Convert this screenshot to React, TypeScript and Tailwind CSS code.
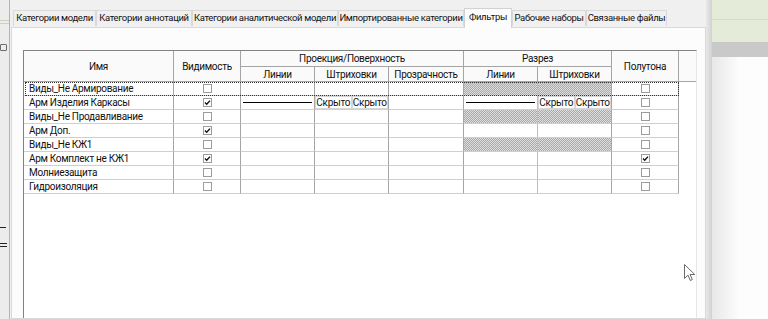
import React from "react";

type Row = {
  name: string;
  visible: boolean;
  halftone?: boolean;
  hatched?: boolean;
  overrides?: boolean;
  focus?: boolean;
};

const rows: Row[] = [
  { name: "Виды_Не Армирование", visible: false, hatched: true, focus: true },
  { name: "Арм Изделия Каркасы", visible: true, overrides: true },
  { name: "Виды_Не Продавливание", visible: false, hatched: true },
  { name: "Арм Доп.", visible: true },
  { name: "Виды_Не КЖ1", visible: false, hatched: true },
  { name: "Арм Комплект не КЖ1", visible: true, halftone: true },
  { name: "Молниезащита", visible: false },
  { name: "Гидроизоляция", visible: false },
];

const tabs = [
  { label: "Категории модели", w: "w-[83px]" },
  { label: "Категории аннотаций", w: "w-[96px]" },
  { label: "Категории аналитической модели", w: "w-[146px]" },
  { label: "Импортированные категории", w: "w-[126px]" },
  { label: "Фильтры", w: "w-[48px]", active: true },
  { label: "Рабочие наборы", w: "w-[74px]" },
  { label: "Связанные файлы", w: "w-[81px]" },
];

const hatch =
  "bg-[image:repeating-conic-gradient(#a9a9a9_0%_25%,#dedede_0%_50%)] bg-[length:2px_2px]";

function CheckBox({ checked }: { checked: boolean }) {
  return (
    <span className="w-[9px] h-[9px] border border-[#9c9c9c] bg-white flex items-center justify-center">
      {checked && (
        <svg width="7" height="7" viewBox="0 0 7 7">
          <path d="M1 3.6 L2.7 5.3 L6 1.6" fill="none" stroke="#111" strokeWidth="1.4" />
        </svg>
      )}
    </span>
  );
}

function Hidden() {
  return (
    <div className="h-full flex">
      <span className="w-1/2 h-full border border-[#d6d6d6] bg-white flex items-center justify-center leading-none">
        Скрыто
      </span>
      <span className="w-1/2 h-full border border-[#d6d6d6] bg-white flex items-center justify-center leading-none">
        Скрыто
      </span>
    </div>
  );
}

function LineSample() {
  return (
    <div className="h-full flex items-center px-[2px]">
      <div className="h-px w-full bg-black" />
    </div>
  );
}

export default function App() {
  return (
    <div className="relative w-[768px] h-[319px] overflow-hidden flex bg-white font-['Roboto',sans-serif] text-[10px] tracking-[-0.3px] text-[#111]">
      {/* window behind, left edge */}
      <div className="w-[10px] h-full bg-[#ececec] border-r border-[#b4b4b4] flex flex-col">
        <div className="h-[20px]" />
        <div className="h-px bg-[#c7d3bb]" />
        <div className="h-[2px]" />
        <div className="h-px bg-[#c7d3bb]" />
        <div className="h-[20px]" />
        <div className="w-[7px] h-[7px] border border-[#6c6c6c] rounded-[1px]" />
        <div className="h-[176px]" />
        <div className="w-[6px] h-px bg-[#222]" />
        <div className="h-[15px]" />
        <div className="w-[7px] h-px bg-[#222]" />
        <div className="h-[2px]" />
        <div className="w-[7px] h-px bg-[#222]" />
      </div>

      {/* dialog */}
      <div className="w-[696px] h-full bg-[#f0f0f0] flex flex-col">
        <div className="h-[27px] flex items-end pl-[3px] text-[9.5px] tracking-[-0.35px]">
          {tabs.map((t) =>
            t.active ? (
              <div
                key={t.label}
                className={`${t.w} h-[20px] -mb-px relative z-10 bg-[#fcfcfc] border-t border-l border-r border-[#d2d2d2] flex items-center justify-center pb-[3px] whitespace-nowrap`}
              >
                {t.label}
              </div>
            ) : (
              <div
                key={t.label}
                className={`${t.w} h-[16px] mb-px bg-[#f0f0f0] border-t border-l border-r border-[#d9d9d9] flex items-center justify-center whitespace-nowrap`}
              >
                {t.label}
              </div>
            )
          )}
        </div>

        <div className="ml-px w-[695px] flex-1 bg-[#fcfcfc] border border-[#d9d9d9] pt-[22px] pl-[11px] flex flex-col">
          <div className="w-[674px] flex-1 bg-white border-l border-t border-[#828282] border-r-[#e6e6e6] border-r">
            {/* header */}
            <div className="grid grid-cols-[150px_67px_74px_74px_75px_74px_74px_67px_17px] grid-rows-[16px_15px] bg-[#fafafa]">
              <div className="row-span-2 border-r border-b border-[#a5a5a5] flex items-center justify-center">Имя</div>
              <div className="row-span-2 border-r border-b border-[#a5a5a5] flex items-center justify-center">Видимость</div>
              <div className="col-span-3 border-r border-b border-[#a5a5a5] flex items-center justify-center">Проекция/Поверхность</div>
              <div className="col-span-2 border-r border-b border-[#a5a5a5] flex items-center justify-center">Разрез</div>
              <div className="row-span-2 border-r border-b border-[#a5a5a5] flex items-center justify-center">Полутона</div>
              <div className="row-span-2 border-b border-[#a5a5a5]" />
              <div className="border-r border-b border-[#a5a5a5] flex items-center justify-center">Линии</div>
              <div className="border-r border-b border-[#a5a5a5] flex items-center justify-center">Штриховки</div>
              <div className="border-r border-b border-[#a5a5a5] flex items-center justify-center">Прозрачность</div>
              <div className="border-r border-b border-[#a5a5a5] flex items-center justify-center">Линии</div>
              <div className="border-r border-b border-[#a5a5a5] flex items-center justify-center">Штриховки</div>
            </div>

            {/* rows */}
            {rows.map((r) => (
              <div key={r.name} className="relative flex h-[14px]">
                <div className="w-[150px] border-r border-r-[#a5a5a5] border-b border-b-[#cfcfcf] flex items-center pl-[5px] whitespace-nowrap leading-none">
                  {r.name}
                </div>
                <div className="w-[67px] border-r border-r-[#a5a5a5] border-b border-b-[#cfcfcf] flex items-center justify-center">
                  <CheckBox checked={r.visible} />
                </div>
                <div className="w-[74px] border-r border-r-[#a5a5a5] border-b border-b-[#cfcfcf]">
                  {r.overrides && <LineSample />}
                </div>
                <div className="w-[74px] border-r border-r-[#a5a5a5] border-b border-b-[#cfcfcf]">
                  {r.overrides && <Hidden />}
                </div>
                <div className="w-[75px] border-r border-r-[#a5a5a5] border-b border-b-[#cfcfcf]" />
                <div className={`w-[74px] border-r border-r-[#bdbdbd] border-b border-b-[#cfcfcf] ${r.hatched ? hatch : ""}`}>
                  {r.overrides && <LineSample />}
                </div>
                <div className={`w-[74px] border-r border-r-[#a5a5a5] border-b border-b-[#cfcfcf] ${r.hatched ? hatch : ""}`}>
                  {r.overrides && <Hidden />}
                </div>
                <div className="w-[67px] border-r border-r-[#a5a5a5] border-b border-b-[#cfcfcf] flex items-center justify-center">
                  <CheckBox checked={!!r.halftone} />
                </div>
                {r.focus && (
                  <div className="absolute left-px top-0 w-[654px] h-[14px] border border-dotted border-[#333] pointer-events-none" />
                )}
              </div>
            ))}
          </div>
        </div>
      </div>

      {/* dialog shadow edge */}
      <div className="w-[6px] h-full bg-gradient-to-r from-[#e9e9e9] to-[#d2d2d2]" />

      {/* application behind, right */}
      <div className="w-[56px] h-full flex flex-col">
        <div className="h-[20px] bg-[#e4ecd9] border-b border-[#d3dcc7]" />
        <div className="h-[22px] bg-[#e4ecd9]" />
        <div className="h-[15px] bg-[#c9c9c9]" />
        <div className="flex-1 bg-gradient-to-r from-[#e8e8e8] via-[#fdfdfd] to-[#fdfdfd]" />
      </div>

      {/* mouse pointer */}
      <svg className="absolute left-[684px] top-[264px]" width="12" height="18" viewBox="0 0 12 18">
        <path
          d="M0.5 0.5 L0.5 14.5 L4 11.2 L6.3 16.5 L8.3 15.6 L6.1 10.5 L10.8 10.5 Z"
          fill="#fff"
          stroke="#6a6a6a"
          strokeWidth="1"
        />
      </svg>
    </div>
  );
}
